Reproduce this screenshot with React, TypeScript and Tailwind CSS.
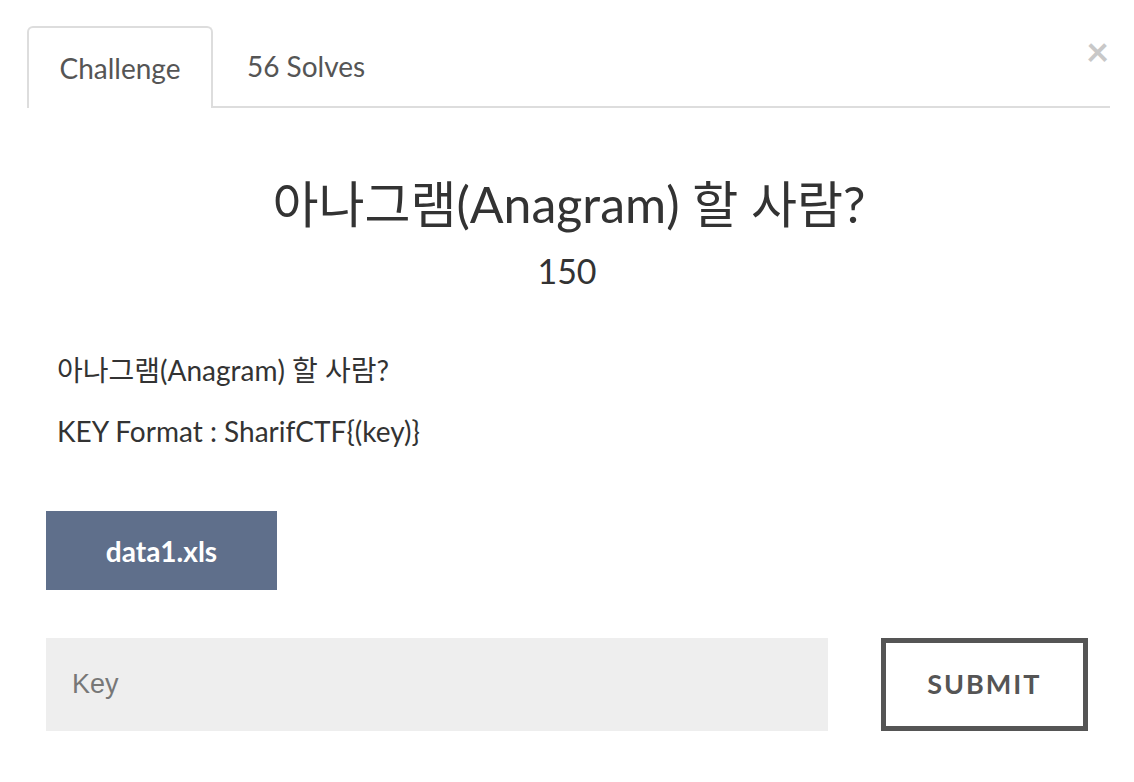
import React, { useState } from 'react';

export default function App() {
  const [tab, setTab] = useState<'challenge' | 'solves'>('challenge');
  const [key, setKey] = useState('');

  return (
    <div
      className="relative w-[1134px] h-[782px] bg-white text-[#333]"
      style={{ fontFamily: 'Lato, "Noto Sans CJK KR", sans-serif' }}
    >
      {/* Close */}
      <button className="absolute left-[1086px] top-[31px] text-[#c8c8c8] text-[40px] leading-none font-bold">
        ×
      </button>

      <div className="pt-[26px] pl-[27px] pr-[24px]">
        {/* Tabs */}
        <div className="flex border-b-2 border-[#dddddd] h-[82px]">
          <button
            onClick={() => setTab('challenge')}
            className={
              tab === 'challenge'
                ? 'w-[186px] -mb-[2px] bg-white border-2 border-b-0 border-[#dddddd] rounded-t-[6px] text-[28px] text-[#555]'
                : 'w-[186px] text-[28px] text-[#555]'
            }
          >
            Challenge
          </button>
          <button
            onClick={() => setTab('solves')}
            className="w-[186px] text-[28px] text-[#555]"
          >
            56 Solves
          </button>
        </div>
      </div>

      <div className="px-[46px]">
        <div className="text-center pt-[67px]">
          <h1 className="text-[50px] leading-[58px] pl-[4px]">아나그램(Anagram) 할 사람?</h1>
          <div className="text-[34px] leading-[48px] mt-[14px]">150</div>
        </div>

        <div className="pl-[11px] mt-[56px] text-[28px] leading-[38px]">
          <p>아나그램(Anagram) 할 사람?</p>
          <p className="mt-[23px]">KEY Format : SharifCTF{'{'}(key){'}'}</p>
        </div>

        <button className="mt-[61px] w-[231px] h-[79px] bg-[#5f6f8b] text-white text-[28px] font-bold">
          data1.xls
        </button>

        <div className="flex mt-[48px] gap-[53px]">
          <input
            value={key}
            onChange={(e) => setKey(e.target.value)}
            placeholder="Key"
            className="w-[784px] h-[93px] bg-[#eeeeee] px-[26px] text-[27px] text-[#555] placeholder:text-[#777] outline-none"
            style={{ fontFamily: '"Liberation Sans", Arial, sans-serif' }}
          />
          <button className="w-[208px] h-[93px] border-[5px] border-[#555] text-[#555] text-[27px] font-bold tracking-[2px]">
            SUBMIT
          </button>
        </div>
      </div>
    </div>
  );
}
